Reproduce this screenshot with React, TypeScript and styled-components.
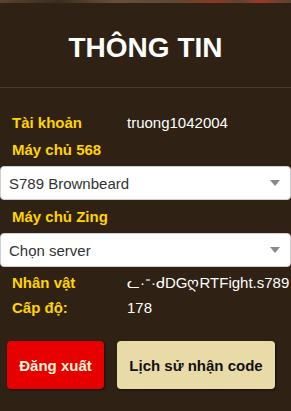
import styled, { createGlobalStyle } from 'styled-components';

const GlobalStyle = createGlobalStyle`
    html, body {
        margin: 0;
        padding: 0;
        background: #2f2113;
    }
    * {
        box-sizing: border-box;
    }
`;

const infoRows = [
    { label: 'Nhân vật', value: 'ᓚ·ᐨ·ᑯDGღRTFight.s789' },
    { label: 'Cấp độ:', value: '178' },
];

function App() {
    return (
        <Page>
            <GlobalStyle />
            <TopStrip />
            <Header>
                <Title>THÔNG TIN</Title>
            </Header>
            <Body>
                <Row>
                    <Label>Tài khoản</Label>
                    <Value>truong1042004</Value>
                </Row>
                <Row>
                    <Label>Máy chủ 568</Label>
                </Row>
                <SelectBox>
                    <span>S789 Brownbeard</span>
                    <Caret />
                </SelectBox>
                <Row>
                    <Label>Máy chủ Zing</Label>
                </Row>
                <SelectBox>
                    <span>Chọn server</span>
                    <Caret />
                </SelectBox>
                {infoRows.map((r) => (
                    <Row key={r.label} $tight>
                        <Label>{r.label}</Label>
                        <Value>{r.value}</Value>
                    </Row>
                ))}
                <Actions>
                    <Button $variant="danger">Đăng xuất</Button>
                    <Button $variant="light">Lịch sử nhận code</Button>
                </Actions>
            </Body>
        </Page>
    );
}

export default App;

const Page = styled.div`
    width: 291px;
    min-height: 411px;
    background: #2f2113;
    font-family: 'Liberation Sans', Arial, sans-serif;
    overflow: hidden;
`;

const TopStrip = styled.div`
    height: 3px;
    background: linear-gradient(
        90deg,
        #5a4330 0%,
        #3b2c1e 20%,
        #6b5038 40%,
        #5d4631 60%,
        #8a3a22 74%,
        #5a4330 82%,
        #9a3b26 89%,
        #5a4330 100%
    );
`;

const Header = styled.div`
    display: flex;
    justify-content: center;
    align-items: center;
    height: 85px;
    padding-top: 6px;
    border-bottom: 1px solid #4b3a28;
`;

const Title = styled.h1`
    margin: 0;
    color: #ffffff;
    font-size: 28px;
    font-weight: 700;
    letter-spacing: 0;
`;

const Body = styled.div`
    display: flex;
    flex-direction: column;
    padding-top: 21px;
`;

const Row = styled.div<{ $tight?: boolean }>`
    display: flex;
    align-items: center;
    padding-left: 12px;
    height: ${(p) => (p.$tight ? '25px' : '27px')};
    font-size: 15px;
    line-height: 1;
`;

const Label = styled.span`
    width: 115px;
    color: #ffd400;
    font-weight: 700;
`;

const Value = styled.span`
    color: #ffffff;
    white-space: nowrap;
`;

const SelectBox = styled.div`
    display: flex;
    align-items: center;
    justify-content: space-between;
    height: 34px;
    margin: 3px 0 3px;
    padding: 0 10px 0 8px;
    background: #ffffff;
    border: 1px solid #cfcfcf;
    border-radius: 4px;
    color: #333333;
    font-size: 15px;
`;

const Caret = styled.span`
    width: 0;
    height: 0;
    border-left: 5px solid transparent;
    border-right: 5px solid transparent;
    border-top: 6px solid #888888;
`;

const Actions = styled.div`
    display: flex;
    gap: 13px;
    padding: 21px 0 0 7px;
`;

const Button = styled.button<{ $variant: 'danger' | 'light' }>`
    height: 48px;
    width: ${(p) => (p.$variant === 'danger' ? '97px' : '158px')};
    border: none;
    border-radius: 4px;
    background: ${(p) => (p.$variant === 'danger' ? '#e60000' : '#e9dba8')};
    color: ${(p) => (p.$variant === 'danger' ? '#fff6d8' : '#111111')};
    font-family: 'Liberation Sans', Arial, sans-serif;
    font-size: 15px;
    font-weight: 700;
    box-shadow: 1px 1px 2px rgba(0, 0, 0, 0.6);
    padding: 0;
`;
